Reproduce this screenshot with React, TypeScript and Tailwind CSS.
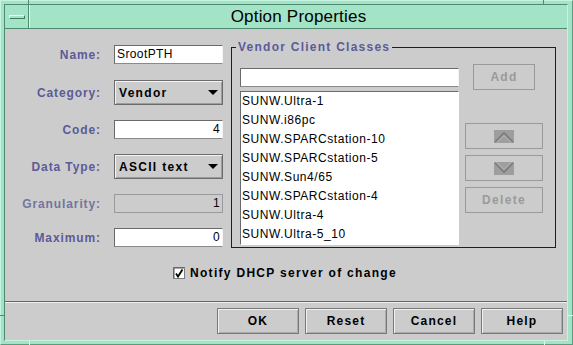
import React from "react";

const items = [
  "SUNW.Ultra-1",
  "SUNW.i86pc",
  "SUNW.SPARCstation-10",
  "SUNW.SPARCstation-5",
  "SUNW.Sun4/65",
  "SUNW.SPARCstation-4",
  "SUNW.Ultra-4",
  "SUNW.Ultra-5_10",
];

function Label({ children, dim }: { children: React.ReactNode; dim?: boolean }) {
  return (
    <span
      className={
        "w-[96px] text-right font-bold text-[12px] tracking-[0.9px] leading-[16px] " +
        (dim ? "text-[#74749c]" : "text-[#5b5b98]")
      }
    >
      {children}
    </span>
  );
}

function TextBox({ value, right, disabled }: { value: string; right?: boolean; disabled?: boolean }) {
  return (
    <div
      className={
        "ml-[13px] w-[109px] h-[19px] border px-[2px] text-[12px] tracking-[0.4px] leading-[17px] text-black " +
        (right ? "text-right " : "text-left ") +
        (disabled
          ? "bg-[#cccccc] border-[#9a9a9a]"
          : "bg-white border-[#6a6a6a] border-b-[#8a8a8a] border-r-[#f4f4f4]")
      }
    >
      {value}
    </div>
  );
}

function Select({ value }: { value: string }) {
  return (
    <div className="ml-[13px] w-[109px] h-[25px] border border-[#6c6c6c] bg-[#cccccc] shadow-[inset_1px_1px_0_#f4f4f4,inset_-1px_-1px_0_#9c9c9c] flex items-center justify-between pl-[4px] pr-[4px]">
      <span className="font-bold text-[12px] tracking-[1.3px] leading-[16px] text-black">{value}</span>
      <svg width="10" height="5" viewBox="0 0 10 5">
        <polygon points="0,0 10,0 5,5" fill="#000" />
      </svg>
    </div>
  );
}

function DisabledButton({ children, w }: { children: React.ReactNode; w: string }) {
  return (
    <div
      className={
        w +
        " h-[26px] border border-[#9a9a9a] flex items-center justify-center font-bold text-[12px] tracking-[1.3px] text-[#9a9a9a]"
      }
    >
      {children}
    </div>
  );
}

function Arrow({ up }: { up?: boolean }) {
  return (
    <svg width="20" height="13" viewBox="0 0 20 13">
      <rect x="0" y="0" width="20" height="13" fill="#9e9e9e" />
      {up ? (
        <>
          <polyline points="1,12 10,3 19,12" fill="none" stroke="#7c7c7c" strokeWidth="1.6" />
          <polyline points="3,12.5 10,5.5 17,12.5" fill="none" stroke="#b8b8b8" strokeWidth="1" />
        </>
      ) : (
        <>
          <polyline points="1,1 10,10 19,1" fill="none" stroke="#7c7c7c" strokeWidth="1.6" />
          <polyline points="3,0.5 10,7.5 17,0.5" fill="none" stroke="#b8b8b8" strokeWidth="1" />
        </>
      )}
    </svg>
  );
}

function Button({ children }: { children: React.ReactNode }) {
  return (
    <div className="w-[82px] h-[26px] border border-[#7a7a7a] shadow-[inset_1px_1px_0_#f0f0f0,inset_-1px_-1px_0_#aaaaaa] bg-[#cccccc] flex items-center justify-center font-bold text-[12px] tracking-[1.2px] text-black">
      {children}
    </div>
  );
}

export default function App() {
  return (
    <div className="relative w-[573px] h-[345px] bg-[#a3e3c6] border border-t-[#c6f3df] border-l-[#c6f3df] border-r-[#5e9a80] border-b-[#5e9a80] pt-[3px] pl-[3px] pr-[4px] pb-[3px] font-['Liberation_Sans',Arial,sans-serif]">
      {/* frame resize ticks */}
      <div className="absolute top-[-1px] left-[27px] w-[1px] h-[4px] bg-[#4e8a70]" />
      <div className="absolute top-[-1px] left-[542px] w-[1px] h-[4px] bg-[#4e8a70]" />
      <div className="absolute bottom-[-1px] left-[28px] w-[1px] h-[4px] bg-[#d8fbec]" />
      <div className="absolute bottom-[-1px] left-[543px] w-[1px] h-[4px] bg-[#d8fbec]" />
      <div className="absolute top-[314px] left-[-1px] w-[4px] h-[1px] bg-[#4e8a70]" />
      <div className="absolute top-[314px] right-[-1px] w-[5px] h-[1px] bg-[#d8fbec]" />

      <div className="flex flex-col h-full border border-t-[#4e8a70] border-l-[#4e8a70] border-r-[#c6f3df] border-b-[#c6f3df]">
        {/* title bar */}
        <div className="flex h-[24px] border-b border-[#4e8a70] shrink-0">
          <div className="w-[24px] border-r border-[#4e8a70] flex items-center pl-[4px]">
            <div className="w-[16px] h-[4px] border border-t-[#e8fff5] border-l-[#e8fff5] border-r-[#3f7a60] border-b-[#3f7a60] bg-[#a3e3c6]" />
          </div>
          <div className="flex-1 border-l border-[#d8fbec] flex items-center justify-center text-[17px] tracking-[0.2px] leading-[20px] text-black">
            Option Properties
          </div>
        </div>

        {/* content */}
        <div className="flex-1 bg-[#cccccc] flex flex-col">
          <div className="flex">
            {/* left form */}
            <div className="w-[218px] pt-[16px] flex flex-col gap-[15px]">
              <div className="flex items-center h-[19px] mb-[1px]">
                <Label>Name:</Label>
                <TextBox value="SrootPTH" />
              </div>
              <div className="flex items-center h-[25px]">
                <Label>Category:</Label>
                <Select value="Vendor" />
              </div>
              <div className="flex items-center h-[19px]">
                <Label>Code:</Label>
                <TextBox value="4" right />
              </div>
              <div className="flex items-center h-[25px]">
                <Label>Data Type:</Label>
                <Select value="ASCII text" />
              </div>
              <div className="flex items-center h-[19px]">
                <Label dim>Granularity:</Label>
                <TextBox value="1" right disabled />
              </div>
              <div className="flex items-center h-[19px]">
                <Label>Maximum:</Label>
                <TextBox value="0" right />
              </div>
            </div>

            {/* group box */}
            <div className="relative ml-[8px] mt-[18px] w-[325px] h-[201px] border border-[#1e1e1e] pl-[8px] pt-[16px]">
              <span className="absolute top-[-9px] left-[4px] px-[2px] bg-[#cccccc] text-[#5b5b98] font-bold text-[12px] tracking-[1.25px] leading-[16px]">
                Vendor Client Classes
              </span>
              <div className="grid grid-cols-[219px_78px] gap-x-[6px] gap-y-[1px]">
                <div className="self-center h-[19px] bg-white border border-[#6a6a6a] border-b-[#8a8a8a] border-r-[#f4f4f4]" />
                <div className="justify-self-center">
                  <DisabledButton w="w-[62px]">Add</DisabledButton>
                </div>
                <div className="h-[154px] bg-white border border-t-[#6a6a6a] border-l-[#6a6a6a] border-r-[#ffffff] border-b-[#ffffff] overflow-hidden">
                  {items.map((it) => (
                    <div key={it} className="h-[19px] pl-[1px] text-[12px] tracking-[0.55px] leading-[19px] text-black">
                      {it}
                    </div>
                  ))}
                </div>
                <div className="pt-[32px] flex flex-col gap-[6px]">
                  <DisabledButton w="w-[78px]">
                    <Arrow up />
                  </DisabledButton>
                  <DisabledButton w="w-[78px]">
                    <Arrow />
                  </DisabledButton>
                  <DisabledButton w="w-[78px]">Delete</DisabledButton>
                </div>
              </div>
            </div>
          </div>

          {/* checkbox */}
          <div className="mt-[19px] h-[12px] flex items-center pl-[168px]">
            <svg width="12" height="12" viewBox="0 0 12 12">
              <rect x="0.5" y="0.5" width="11" height="11" fill="#ffffff" stroke="#7c7c7c" />
              <line x1="1" y1="1" x2="11" y2="1" stroke="#555" />
              <line x1="1" y1="1" x2="1" y2="11" stroke="#555" />
              <path d="M3 6.5 L5 9.5 L9.5 2.5" fill="none" stroke="#000" strokeWidth="1.8" />
            </svg>
            <span className="ml-[5px] font-bold text-[12px] tracking-[1.3px] leading-[14px] text-black">
              Notify DHCP server of change
            </span>
          </div>

          {/* separator */}
          <div className="mt-[22px] h-[2px] border-t border-[#5e5e9e] border-b border-b-[#eeeeee]" />

          {/* buttons */}
          <div className="mt-[5px] flex justify-end gap-[6px] pr-[4px]">
            <Button>OK</Button>
            <Button>Reset</Button>
            <Button>Cancel</Button>
            <Button>Help</Button>
          </div>
        </div>
      </div>
    </div>
  );
}
